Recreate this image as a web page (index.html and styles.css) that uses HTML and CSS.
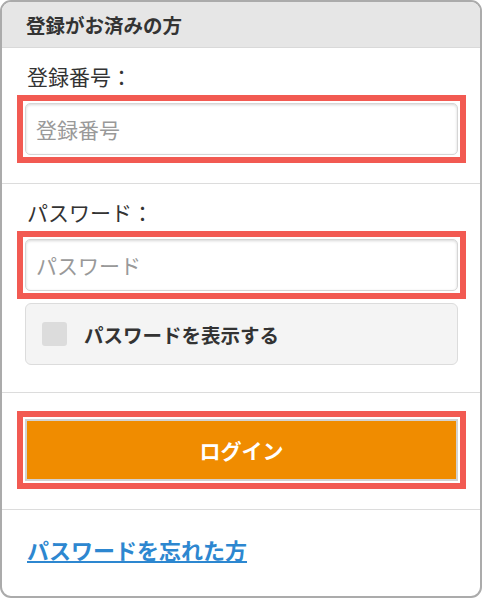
FILE: index.html
```html
<!DOCTYPE html>
<html lang="ja">
<head>
<meta charset="utf-8">
<title>ログイン</title>
<link rel="stylesheet" href="styles.css">
</head>
<body>
<div class="panel">
  <div class="panel-head">登録がお済みの方</div>
  <div class="section section-id">
    <div class="label">登録番号：</div>
    <div class="frame">
      <input class="field" type="text" placeholder="登録番号">
    </div>
  </div>
  <div class="section section-pw">
    <div class="label">パスワード：</div>
    <div class="frame">
      <input class="field" type="password" placeholder="パスワード">
    </div>
    <label class="show-pw">
      <span class="check"></span>
      <span class="show-text">パスワードを表示する</span>
    </label>
  </div>
  <div class="section section-btn">
    <div class="frame">
      <button class="login" type="button">ログイン</button>
    </div>
  </div>
  <div class="section section-link">
    <a class="forgot" href="#">パスワードを忘れた方</a>
  </div>
</div>
</body>
</html>
```

FILE: styles.css
```css
html, body {
  margin: 0;
  padding: 0;
  background: #fff;
}
body {
  font-family: "Noto Sans CJK JP", "Noto Sans", sans-serif;
  color: #333;
}
.panel {
  box-sizing: border-box;
  width: 482px;
  height: 598px;
  border: 2px solid #ababab;
  border-radius: 11px;
  overflow: hidden;
  display: flex;
  flex-direction: column;
  background: #fff;
}
.panel-head {
  height: 45px;
  line-height: 45px;
  background: #e6e6e6;
  border-bottom: 1px solid #d9d9d9;
  padding-left: 24px;
  font-size: 19.5px;
  font-weight: bold;
  color: #333;
}
.section {
  padding: 0 14px 0 15px;
  border-bottom: 1px solid #dcdcdc;
}
.section-id {
  padding-top: 13px;
  padding-bottom: 20px;
}
.section-pw {
  padding-top: 13px;
  padding-bottom: 27px;
}
.section-btn {
  padding-top: 18px;
  padding-bottom: 20px;
}
.section-link {
  flex: 1;
  border-bottom: none;
  padding-top: 24px;
}
.label {
  font-size: 21px;
  line-height: 30px;
  margin-bottom: 4px;
  padding-left: 10px;
  color: #333;
}
.frame {
  border: 6px solid #f25a52;
  padding: 2px;
}
.field {
  box-sizing: border-box;
  display: block;
  width: 433px;
  height: 52px;
  margin: 0;
  border: 1px solid #d6d6d6;
  border-radius: 5px;
  box-shadow: inset 0 1px 3px rgba(0,0,0,0.16);
  padding: 0 10px 0 10px;
  font-family: "Noto Sans CJK JP", sans-serif;
  font-size: 21px;
  color: #333;
  background: #fff;
  outline: none;
}
.field::placeholder {
  color: #999;
}
.show-pw {
  box-sizing: border-box;
  margin: 4px 0 0 8px;
  height: 62px;
  width: 433px;
  display: flex;
  align-items: center;
  gap: 17px;
  padding-left: 16px;
  background: #f4f4f4;
  border: 1px solid #dcdcdc;
  border-radius: 6px;
}
.check {
  width: 25px;
  height: 24px;
  border-radius: 3px;
  background: #dcdcdc;
}
.show-text {
  font-size: 19.5px;
  font-weight: bold;
  color: #333;
}
.login {
  box-sizing: border-box;
  display: block;
  width: 433px;
  height: 62px;
  margin: 0;
  border: 2px solid #d2d2d2;
  background: #f08c00;
  color: #fff;
  font-family: "Noto Sans CJK JP", sans-serif;
  font-size: 21px;
  font-weight: bold;
  padding: 0;
  cursor: pointer;
}
.forgot {
  display: inline-block;
  margin-left: 10px;
  font-size: 22px;
  line-height: 30px;
  font-weight: bold;
  color: #2d87d0;
  text-decoration: underline;
  text-underline-offset: 2px;
}
```
